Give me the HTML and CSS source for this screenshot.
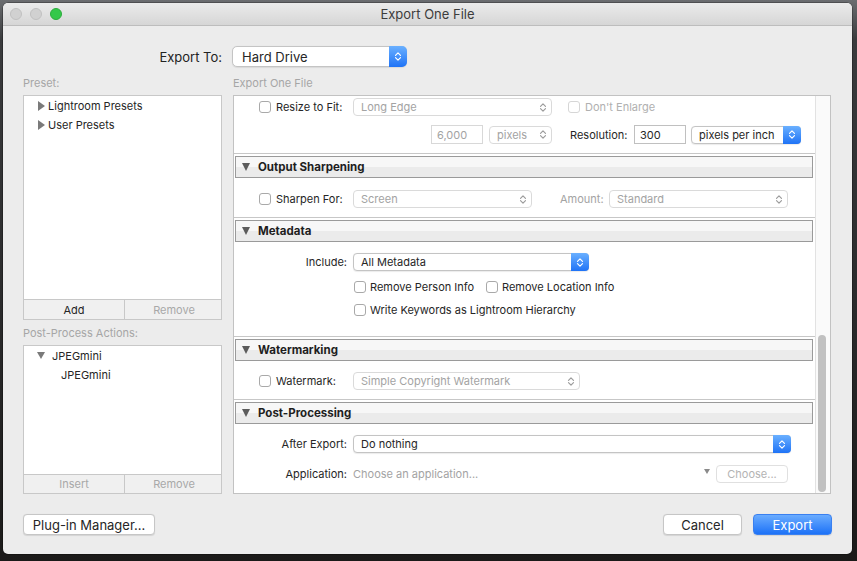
FILE: index.html
```html
<!DOCTYPE html>
<html>
<head>
<meta charset="utf-8">
<title>Export One File</title>
<link rel="stylesheet" href="styles.css">
</head>
<body>
<div class="window">
  <div class="titlebar">
    <div class="lights">
      <span class="light gray"></span>
      <span class="light gray"></span>
      <span class="light green"></span>
    </div>
    <div class="title">Export One File</div>
  </div>
  <div class="content">
    <div class="export-to">
      <div class="et-label">Export To:</div>
      <div class="popup blue big w-hd"><span class="val">Hard Drive</span><span class="arrows"><svg class="chev" viewBox="0 0 8 11"><path d="M1.5 4.3 4 1.8 6.5 4.3M1.5 6.7 4 9.2 6.5 6.7"/></svg></span></div>
    </div>

    <div class="columns">
      <div class="left">
        <div class="col-label">Preset:</div>
        <div class="listbox preset-box">
          <div class="tree-row"><span class="tri-right"></span>Lightroom Presets</div>
          <div class="tree-row"><span class="tri-right"></span>User Presets</div>
        </div>
        <div class="btnbar">
          <div class="bb">Add</div>
          <div class="bb dis">Remove</div>
        </div>
        <div class="col-label pp-label">Post-Process Actions:</div>
        <div class="listbox pp-box">
          <div class="tree-row"><span class="tri-down"></span>JPEGmini</div>
          <div class="tree-row child">JPEGmini</div>
        </div>
        <div class="btnbar short">
          <div class="bb dis">Insert</div>
          <div class="bb dis">Remove</div>
        </div>
      </div>

      <div class="right">
        <div class="col-label">Export One File</div>
        <div class="panel">
          <div class="scrollarea">
            <div class="sect-body top-body">
              <div class="row r1">
                <div class="lbl"><span class="cb"></span>Resize to Fit:</div>
                <div class="popup dis w199"><span class="val">Long Edge</span><span class="arrows"><svg class="chev" viewBox="0 0 8 11"><path d="M1.5 4.3 4 1.8 6.5 4.3M1.5 6.7 4 9.2 6.5 6.7"/></svg></span></div>
                <span class="cb dis enlarge-cb"></span><span class="dis-text">Don't Enlarge</span>
              </div>
              <div class="row r2">
                <div class="lbl"></div>
                <div class="field dis-field w52 ml78">6,000</div>
                <div class="popup dis w63 ml6"><span class="val">pixels</span><span class="arrows"><svg class="chev" viewBox="0 0 8 11"><path d="M1.5 4.3 4 1.8 6.5 4.3M1.5 6.7 4 9.2 6.5 6.7"/></svg></span></div>
                <div class="res-label">Resolution:</div>
                <div class="field w52">300</div>
                <div class="popup blue w110 ml5"><span class="val">pixels per inch</span><span class="arrows"><svg class="chev" viewBox="0 0 8 11"><path d="M1.5 4.3 4 1.8 6.5 4.3M1.5 6.7 4 9.2 6.5 6.7"/></svg></span></div>
              </div>
            </div>

            <div class="section">
              <div class="sect-head"><span class="tri-head"></span>Output Sharpening</div>
              <div class="sect-body sharpen-body">
                <div class="row">
                  <div class="lbl"><span class="cb"></span>Sharpen For:</div>
                  <div class="popup dis w179"><span class="val">Screen</span><span class="arrows"><svg class="chev" viewBox="0 0 8 11"><path d="M1.5 4.3 4 1.8 6.5 4.3M1.5 6.7 4 9.2 6.5 6.7"/></svg></span></div>
                  <div class="amount-label">Amount:</div>
                  <div class="popup dis w179"><span class="val">Standard</span><span class="arrows"><svg class="chev" viewBox="0 0 8 11"><path d="M1.5 4.3 4 1.8 6.5 4.3M1.5 6.7 4 9.2 6.5 6.7"/></svg></span></div>
                </div>
              </div>
            </div>

            <div class="section">
              <div class="sect-head"><span class="tri-head"></span>Metadata</div>
              <div class="sect-body meta-body">
                <div class="row">
                  <div class="lbl right">Include:</div>
                  <div class="popup blue w236"><span class="val">All Metadata</span><span class="arrows"><svg class="chev" viewBox="0 0 8 11"><path d="M1.5 4.3 4 1.8 6.5 4.3M1.5 6.7 4 9.2 6.5 6.7"/></svg></span></div>
                </div>
                <div class="row cbrow cb1">
                  <div class="lbl"></div>
                  <div class="cbitem w131"><span class="cb"></span>Remove Person Info</div>
                  <div class="cbitem"><span class="cb"></span>Remove Location Info</div>
                </div>
                <div class="row cbrow cb2">
                  <div class="lbl"></div>
                  <div class="cbitem"><span class="cb"></span>Write Keywords as Lightroom Hierarchy</div>
                </div>
              </div>
            </div>

            <div class="section">
              <div class="sect-head"><span class="tri-head"></span>Watermarking</div>
              <div class="sect-body wm-body">
                <div class="row">
                  <div class="lbl"><span class="cb"></span>Watermark:</div>
                  <div class="popup dis w227"><span class="val">Simple Copyright Watermark</span><span class="arrows"><svg class="chev" viewBox="0 0 8 11"><path d="M1.5 4.3 4 1.8 6.5 4.3M1.5 6.7 4 9.2 6.5 6.7"/></svg></span></div>
                </div>
              </div>
            </div>

            <div class="section last">
              <div class="sect-head"><span class="tri-head"></span>Post-Processing</div>
              <div class="sect-body pp-body">
                <div class="row">
                  <div class="lbl right">After Export:</div>
                  <div class="popup blue w438"><span class="val">Do nothing</span><span class="arrows"><svg class="chev" viewBox="0 0 8 11"><path d="M1.5 4.3 4 1.8 6.5 4.3M1.5 6.7 4 9.2 6.5 6.7"/></svg></span></div>
                </div>
                <div class="row app-row">
                  <div class="lbl right">Application:</div>
                  <div class="app-cell">
                    <span class="app-text">Choose an application...</span>
                    <span class="tri-small"></span>
                    <div class="choose-btn">Choose...</div>
                  </div>
                </div>
              </div>
            </div>
          </div>
          <div class="scrolltrack"><div class="thumb"></div></div>
        </div>
      </div>
    </div>

    <div class="footer">
      <div class="btn w132">Plug-in Manager...</div>
      <div class="footer-right">
        <div class="btn w79">Cancel</div>
        <div class="btn primary w79">Export</div>
      </div>
    </div>
  </div>
</div>
</body>
</html>
```

FILE: styles.css
```css
html, body {
  margin: 0;
  padding: 0;
}
body {
  width: 857px;
  height: 561px;
  overflow: hidden;
  background: linear-gradient(180deg, #6b6d70 0px, #3a3b3d 40px, #2b2b2c 300px, #1b1a19 561px);
  font-family: "Inter", "Noto Sans", sans-serif;
  font-size: 11px;
  color: #262626;
}
.window {
  margin: 3px 0 0 3px;
  width: 849px;
  height: 551px;
  background: #ececec;
  border-radius: 5px;
  overflow: hidden;
  box-shadow: 0 0 0 0.5px rgba(0,0,0,0.5);
}
.titlebar {
  height: 22px;
  border-bottom: 1px solid #bdbdbd;
  background: linear-gradient(#ebebeb, #d6d6d6);
  display: flex;
  align-items: center;
  position: relative;
}
.lights {
  display: flex;
  gap: 8px;
  padding-left: 7px;
}
.light {
  width: 12px;
  height: 12px;
  border-radius: 50%;
  box-sizing: border-box;
}
.light.gray {
  background: #d1d1d1;
  border: 1px solid #c0c0c0;
}
.light.green {
  background: #34c84a;
  border: 1px solid #2aac3b;
}
.title {
  position: absolute;
  left: 0;
  right: 0;
  text-align: center;
  font-size: 13px;
  color: #3c3c3c;
}
.content {
  padding: 0 21px 0 20px;
}
.export-to {
  margin-top: 20px;
  display: flex;
  align-items: center;
  height: 21px;
}
.et-label {
  width: 199px;
  text-align: right;
  font-size: 13px;
  margin-right: 10px;
  color: #222;
}

/* popups */
.popup {
  display: flex;
  align-items: center;
  height: 18px;
  box-sizing: border-box;
  border: 1px solid #c4c4c4;
  border-radius: 4px;
  background: #fff;
  box-shadow: 0 0.5px 1px rgba(0,0,0,0.08);
  padding-left: 7px;
  flex: none;
  font-size: 11px;
  color: #262626;
}
.popup .val {
  flex: 1;
  white-space: nowrap;
  overflow: hidden;
}
.popup .arrows {
  width: 17px;
  align-self: stretch;
  display: flex;
  align-items: center;
  justify-content: center;
  color: #555;
}
.chev {
  width: 8px;
  height: 11px;
}
.chev path {
  fill: none;
  stroke: currentColor;
  stroke-width: 1.2;
  stroke-linecap: round;
  stroke-linejoin: round;
}
.popup.dis {
  border-color: #dadada;
  color: #a3a3a3;
  box-shadow: none;
}
.popup.dis .arrows {
  color: #9c9c9c;
}
.popup.blue .arrows {
  background: linear-gradient(#6ab0ff, #1f73f6);
  color: #fff;
  margin: -1px -1px -1px 0;
  border-radius: 0 4px 4px 0;
  width: 18px;
}
.popup.big {
  height: 21px;
  font-size: 13px;
  padding-left: 9px;
  border-radius: 5px;
}
.popup.big .arrows {
  border-radius: 0 5px 5px 0;
}
.w-hd { width: 175px; }
.w199 { width: 199px; }
.w63 { width: 63px; }
.w110 { width: 110px; }
.w179 { width: 179px; }
.w236 { width: 236px; }
.w227 { width: 227px; }
.w438 { width: 438px; }
.w52 { width: 52px; }
.w131 { width: 131px; }
.ml78 { margin-left: 78px; }
.ml6 { margin-left: 6px; }
.ml5 { margin-left: 5px; }

/* columns */
.columns {
  display: grid;
  grid-template-columns: 199px 598px;
  column-gap: 11px;
  margin-top: 9px;
}
.col-label {
  height: 15px;
  line-height: 15px;
  color: #a6a6a6;
  margin-bottom: 4px;
}
.listbox {
  background: #fff;
  border: 1px solid #c8c8c8;
  box-sizing: border-box;
  padding-top: 0;
}
.preset-box { height: 205px; }
.pp-box { height: 130px; }
.pp-label { margin-top: 6px; }
.tree-row {
  height: 19px;
  display: flex;
  align-items: center;
  padding-left: 14px;
  color: #262626;
}
.tri-right {
  width: 0;
  height: 0;
  border-top: 5px solid transparent;
  border-bottom: 5px solid transparent;
  border-left: 7px solid #7a7a7a;
  margin-right: 3px;
}
.tri-down {
  width: 0;
  height: 0;
  border-left: 4.5px solid transparent;
  border-right: 4.5px solid transparent;
  border-top: 7px solid #7a7a7a;
  margin-left: 0;
  margin-right: 7px;
}
.pp-box .tree-row { padding-left: 13px; }
.tree-row.child { padding-left: 37px; }
.btnbar {
  display: grid;
  grid-template-columns: 100px 99px;
  height: 20px;
  box-sizing: border-box;
  border: 1px solid #c8c8c8;
  border-top: none;
  background: #f0f0f0;
}
.btnbar.short { height: 19px; }
.bb {
  display: flex;
  align-items: center;
  justify-content: center;
  font-size: 11px;
  color: #262626;
}
.bb + .bb {
  border-left: 1px solid #c8c8c8;
}
.bb.dis { color: #a8a8a8; }

/* panel */
.panel {
  height: 399px;
  box-sizing: border-box;
  border: 1px solid #c2c2c2;
  background: #fff;
  display: flex;
}
.scrollarea {
  flex: 1;
  overflow: hidden;
}
.scrolltrack {
  width: 14px;
  flex: none;
  border-left: 1px solid #e2e2e2;
  background: #fafafa;
  position: relative;
}
.thumb {
  position: absolute;
  left: 2px;
  width: 8px;
  top: 239px;
  height: 157px;
  border-radius: 4px;
  background: #c1c1c1;
}
.sect-body {
  border-bottom: 1px solid #c7c7c7;
}
.section.last .sect-body { border-bottom: none; }
.section {
  padding-top: 2px;
}
.sect-head {
  height: 22px;
  box-sizing: border-box;
  margin: 0 2px 0 1px;
  border: 1px solid #9a9a9a;
  background: linear-gradient(#f7f7f7 0, #f7f7f7 50%, #ebebeb 50%, #ebebeb 100%);
  display: flex;
  align-items: center;
  font-weight: 700;
  font-size: 11.5px;
  color: #1e1e1e;
  padding-left: 6px;
}
.tri-head {
  width: 0;
  height: 0;
  border-left: 4.5px solid transparent;
  border-right: 4.5px solid transparent;
  border-top: 8px solid #5c5c5c;
  margin-right: 8px;
}
.row {
  display: flex;
  align-items: center;
  height: 18px;
}
.lbl {
  width: 119px;
  flex: none;
  display: flex;
  align-items: center;
  padding-left: 25px;
  box-sizing: border-box;
  white-space: nowrap;
}
.lbl.right {
  justify-content: flex-end;
  padding-left: 0;
  padding-right: 6px;
}
.cb {
  width: 12px;
  height: 12px;
  box-sizing: border-box;
  border: 1px solid #a9a9a9;
  border-radius: 3px;
  background: #fff;
  margin-right: 5px;
  flex: none;
}
.cb.dis { border-color: #d6d6d6; }
.dis-text { color: #b0b0b0; }
.enlarge-cb { margin-left: 16px; }
.top-body { padding: 2px 0 9px; }
.r2 { margin-top: 9px; height: 19px; }
.field {
  height: 19px;
  box-sizing: border-box;
  border: 1px solid #c0c0c0;
  background: #fff;
  display: flex;
  align-items: center;
  padding-left: 5px;
  flex: none;
}
.dis-field {
  border-color: #d8d8d8;
  color: #a3a3a3;
}
.res-label {
  width: 64px;
  margin-left: 18px;
  flex: none;
}
.amount-label {
  width: 49px;
  margin-left: 28px;
  flex: none;
  color: #a3a3a3;
}
.sharpen-body { padding: 12px 0 9px; }
.meta-body { padding: 11px 0 18px; }
.cbrow { height: 16px; }
.cb1 { margin-top: 8px; }
.cb2 { margin-top: 7px; }
.cbitem {
  display: flex;
  align-items: center;
  padding-left: 1px;
  white-space: nowrap;
  flex: none;
}
.cbitem .cb { margin-right: 4px; }
.wm-body { padding: 11px 0 9px; }
.pp-body { padding: 11px 0 0; }
.app-row { margin-top: 12px; }
.app-cell {
  width: 435px;
  display: flex;
  align-items: center;
}
.app-text {
  color: #a3a3a3;
  flex: 1;
}
.tri-small {
  width: 0;
  height: 0;
  border-left: 3.5px solid transparent;
  border-right: 3.5px solid transparent;
  border-top: 5px solid #8a8a8a;
  margin-right: 6px;
  margin-top: -5px;
}
.choose-btn {
  width: 72px;
  height: 18px;
  box-sizing: border-box;
  border: 1px solid #e0e0e0;
  border-radius: 4px;
  background: #fff;
  color: #b3b3b3;
  display: flex;
  align-items: center;
  justify-content: center;
}

/* footer */
.footer {
  margin-top: 20px;
  display: flex;
  justify-content: space-between;
  align-items: center;
}
.footer-right {
  display: flex;
  gap: 11px;
  margin-right: -1px;
}
.btn {
  height: 21px;
  box-sizing: border-box;
  border: 1px solid #c6c6c6;
  border-radius: 4px;
  background: #fff;
  box-shadow: 0 0.5px 1px rgba(0,0,0,0.1);
  display: flex;
  align-items: center;
  justify-content: center;
  font-size: 13px;
  color: #262626;
}
.btn.primary {
  background: linear-gradient(#6aacff, #1d72f7);
  border-color: #3a80f0;
  color: #fff;
}
.w132 { width: 132px; }
.w79 { width: 79px; }
```
